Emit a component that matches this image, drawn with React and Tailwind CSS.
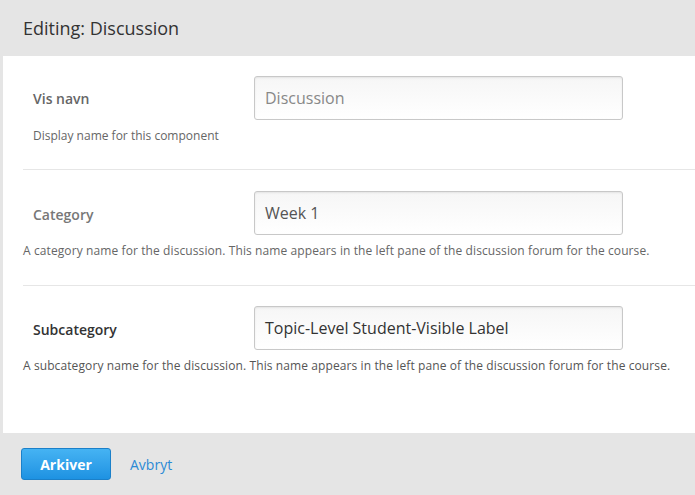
export default function App() {
  const inputCls =
    "w-[369px] h-[44px] rounded-[3px] border border-[#c8c8c8] bg-gradient-to-b from-[#f6f6f6] to-white shadow-[inset_0_1px_2px_rgba(0,0,0,0.08)] px-[10px] flex items-center text-[16px]";
  return (
    <div className="w-[695px] h-[495px] bg-[#e5e5e5] flex flex-col font-['Open_Sans',sans-serif]">
      <div className="h-[56px] shrink-0 flex items-center px-[23px] text-[18px] text-[#333]">
        Editing: Discussion
      </div>
      <div className="flex-1 ml-[3px] bg-white pl-[20px] flex flex-col">
        <div className="pt-[20px] pb-[25px] border-b border-[#e6e6e6]">
          <div className="flex items-center">
            <div className="w-[231px] pl-[10px] text-[14px] font-semibold text-[#666]">Vis navn</div>
            <div className={inputCls + " text-[#888]"}>Discussion</div>
          </div>
          <div className="mt-[7px] pl-[10px] text-[12px] leading-[17px] text-[#666]">
            Display name for this component
          </div>
        </div>
        <div className="pt-[21px] pb-[26px] border-b border-[#e6e6e6]">
          <div className="flex items-center">
            <div className="w-[231px] pl-[10px] pt-[3px] text-[14px] font-semibold text-[#777]">Category</div>
            <div className={inputCls + " text-[#555]"}>Week 1</div>
          </div>
          <div className="mt-[7px] text-[12px] leading-[17px] tracking-[0.1px] text-[#666]">
            A category name for the discussion. This name appears in the left pane of the discussion forum for the course.
          </div>
        </div>
        <div className="pt-[20px]">
          <div className="flex items-center">
            <div className="w-[231px] pl-[10px] pt-[2px] text-[14px] font-semibold text-[#333]">Subcategory</div>
            <div className={inputCls + " text-[#333]"}>Topic-Level Student-Visible Label</div>
          </div>
          <div className="mt-[7px] text-[12px] leading-[17px] tracking-[0.1px] text-[#555]">
            A subcategory name for the discussion. This name appears in the left pane of the discussion forum for the course.
          </div>
        </div>
      </div>
      <div className="h-[62px] shrink-0 flex items-center px-[21px] gap-[19px]">
        <div className="w-[90px] h-[32px] rounded-[3px] border border-[#1b80c9] bg-gradient-to-b from-[#45b3f3] to-[#1d92e2] flex items-center justify-center text-white text-[14px] font-bold">
          Arkiver
        </div>
        <div className="text-[14px] text-[#2b8ad5]">Avbryt</div>
      </div>
    </div>
  );
}
